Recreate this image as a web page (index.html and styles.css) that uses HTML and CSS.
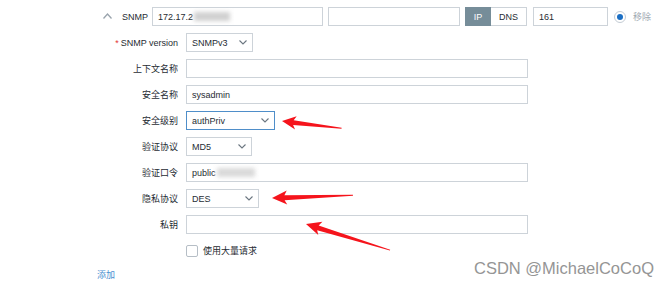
FILE: index.html
```html
<!DOCTYPE html>
<html lang="zh-CN">
<head>
    <meta charset="UTF-8">
    <title>SNMP interface</title>
    <link rel="stylesheet" href="styles.css">
</head>
<body>
    <div class="page">
        <div class="iface-row">
            <svg class="collapse" width="9" height="6" viewBox="0 0 9 6"><path d="M0.5 5.5 L4.5 1 L8.5 5.5" fill="none" stroke="#9aa4ad" stroke-width="1.3"/></svg>
            <span class="iface-label">SNMP</span>
            <div class="input ip-input">172.17.2<span class="blur"></span></div>
            <div class="input dns-input"></div>
            <div class="toggle">
                <span class="toggle-btn active">IP</span>
                <span class="toggle-btn">DNS</span>
            </div>
            <div class="input port-input">161</div>
            <span class="radio"><span class="radio-dot"></span></span>
            <span class="remove">移除</span>
        </div>

        <div class="form">
            <label class="label"><span class="req">*</span> SNMP version</label>
            <div class="field"><div class="select w-snmp">SNMPv3<svg class="caret" width="8" height="5" viewBox="0 0 8 5"><path d="M0.5 0.5 L4 4 L7.5 0.5" fill="none" stroke="#6b7680" stroke-width="1.1"/></svg></div></div>

            <label class="label">上下文名称</label>
            <div class="field"><div class="input wide"></div></div>

            <label class="label">安全名称</label>
            <div class="field"><div class="input wide">sysadmin</div></div>

            <label class="label">安全级别</label>
            <div class="field"><div class="select w-level focused">authPriv<svg class="caret" width="8" height="5" viewBox="0 0 8 5"><path d="M0.5 0.5 L4 4 L7.5 0.5" fill="none" stroke="#6b7680" stroke-width="1.1"/></svg></div></div>

            <label class="label">验证协议</label>
            <div class="field"><div class="select w-md5">MD5<svg class="caret" width="8" height="5" viewBox="0 0 8 5"><path d="M0.5 0.5 L4 4 L7.5 0.5" fill="none" stroke="#6b7680" stroke-width="1.1"/></svg></div></div>

            <label class="label">验证口令</label>
            <div class="field"><div class="input wide">public<span class="blur blur-pass"></span></div></div>

            <label class="label">隐私协议</label>
            <div class="field"><div class="select w-des">DES<svg class="caret" width="8" height="5" viewBox="0 0 8 5"><path d="M0.5 0.5 L4 4 L7.5 0.5" fill="none" stroke="#6b7680" stroke-width="1.1"/></svg></div></div>

            <label class="label">私钥</label>
            <div class="field"><div class="input wide"></div></div>

            <span class="label"></span>
            <div class="field check-field"><span class="checkbox"></span><span>使用大量请求</span></div>
        </div>

        <a class="add-link">添加</a>

        <svg class="arrows" width="669" height="288" viewBox="0 0 669 288">
            <g fill="#f5141c">
                <polygon transform="translate(282 121) rotate(6.8)" points="0,0 14,-6.5 11.5,-2.2 60,-0.4 60,0.6 11.5,2.6 14,7"/>
                <polygon transform="translate(272 198) rotate(-2.1)" points="0,0 15,-7 12.5,-2.4 81,-0.4 81,0.6 12.5,2.6 15,7"/>
                <polygon transform="translate(306 224) rotate(17.2)" points="0,0 15,-7 12.5,-2.4 88,-0.4 88,0.6 12.5,2.6 15,7"/>
            </g>
        </svg>

        <div class="watermark">CSDN @MichaelCoCoQ</div>
    </div>
</body>
</html>
```

FILE: styles.css
```css
body {
    margin: 0;
    background: #fff;
    font-family: "Liberation Sans", Arial, "Noto Sans CJK SC", sans-serif;
    font-size: 9px;
    color: #1f2c33;
}

.page {
    position: relative;
    width: 669px;
    height: 288px;
    overflow: hidden;
    padding-top: 7px;
    box-sizing: border-box;
}

/* Interface row */
.iface-row {
    display: flex;
    align-items: center;
    height: 19px;
    padding-left: 103px;
}

.collapse {
    margin-right: 10px;
    margin-top: -2px;
}

.iface-label {
    width: 26px;
    margin-right: 4px;
}

.input {
    box-sizing: border-box;
    height: 19px;
    border: 1px solid #cdd3d9;
    background: #fff;
    padding: 0 5px;
    display: flex;
    align-items: center;
    white-space: nowrap;
}

.ip-input {
    width: 171px;
}

.dns-input {
    width: 132px;
    margin-left: 5px;
}

.blur {
    display: inline-block;
    width: 36px;
    height: 9px;
    background: #d0d0d0;
    filter: blur(2px);
    margin-left: 1px;
}

.blur-pass {
    width: 38px;
    opacity: 0.8;
}

.toggle {
    display: flex;
    margin-left: 5px;
    height: 19px;
}

.toggle-btn {
    box-sizing: border-box;
    height: 19px;
    display: flex;
    align-items: center;
    justify-content: center;
    border: 1px solid #cdd3d9;
    background: #fff;
    color: #1f2c33;
}

.toggle-btn.active {
    width: 26px;
    background: #768d99;
    border-color: #768d99;
    color: #fff;
}

.toggle-btn:last-child {
    width: 36px;
    border-left: none;
}

.port-input {
    width: 75px;
    margin-left: 6px;
}

.radio {
    box-sizing: border-box;
    width: 12px;
    height: 12px;
    border: 1px solid #c4ccd4;
    border-radius: 50%;
    margin-left: 6px;
    display: flex;
    align-items: center;
    justify-content: center;
}

.radio-dot {
    width: 6px;
    height: 6px;
    border-radius: 50%;
    background: #1b6fc4;
}

.remove {
    margin-left: 7px;
    color: #9ea7b0;
}

/* Form grid */
.form {
    display: grid;
    grid-template-columns: 170px 1fr;
    column-gap: 8px;
    row-gap: 7px;
    padding-left: 8px;
    margin-top: 7px;
}

.label {
    height: 19px;
    display: flex;
    align-items: center;
    justify-content: flex-end;
}

.req {
    color: #e33734;
    margin-right: 2px;
}

.field {
    height: 19px;
    display: flex;
    align-items: center;
}

.wide {
    width: 342px;
}

.select {
    box-sizing: border-box;
    height: 19px;
    border: 1px solid #cdd3d9;
    background: #fff;
    padding: 0 5px;
    display: flex;
    align-items: center;
    justify-content: space-between;
}

.select.focused {
    border-color: #4f8ec9;
}

.w-snmp { width: 67px; }
.w-level { width: 89px; }
.w-md5 { width: 66px; }
.w-des { width: 73px; }

.check-field {
    gap: 5px;
}

.checkbox {
    box-sizing: border-box;
    width: 12px;
    height: 12px;
    border: 1px solid #b6bec6;
    border-radius: 2px;
    background: #fff;
}

.add-link {
    display: block;
    margin: 8px 0 0 97px;
    color: #4a8fd0;
}

/* Overlays */
.arrows {
    position: absolute;
    top: 0;
    left: 0;
    pointer-events: none;
}

.watermark {
    position: absolute;
    left: 474px;
    top: 259px;
    font-size: 16.5px;
    color: #959595;
    white-space: nowrap;
}
```
